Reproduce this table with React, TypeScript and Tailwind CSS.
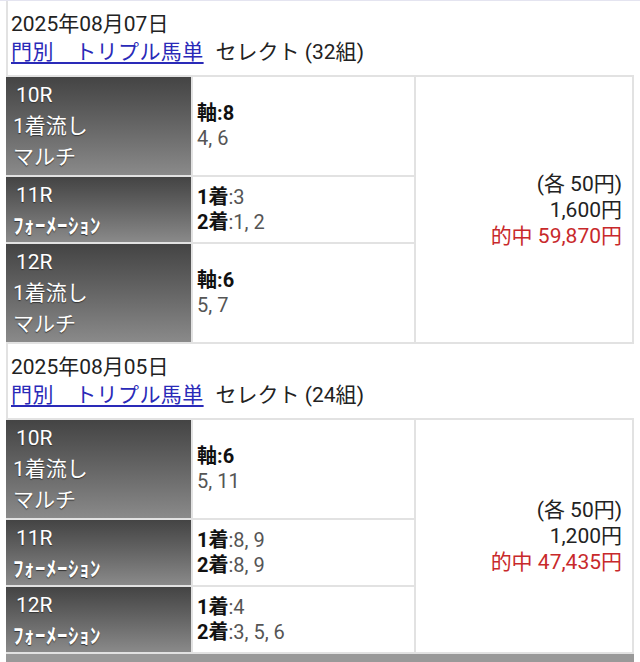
const font = { fontFamily: "Roboto, 'Noto Sans CJK JP', sans-serif" };

type Race = {
  race: string;
  kind: string[];
  picks: { label: string; bold: boolean; value: string }[];
  tall: boolean;
};

const blocks = [
  {
    date: "2025年08月07日",
    count: "32組",
    unit: "1,600円",
    hit: "59,870円",
    races: [
      { race: "10R", kind: ["1着流し", "マルチ"], picks: [{ label: "軸:8", bold: true, value: "" }, { label: "", bold: false, value: "4, 6" }], tall: true },
      { race: "11R", kind: ["ﾌｫｰﾒｰｼｮﾝ"], picks: [{ label: "1着", bold: true, value: ":3" }, { label: "2着", bold: true, value: ":1, 2" }], tall: false },
      { race: "12R", kind: ["1着流し", "マルチ"], picks: [{ label: "軸:6", bold: true, value: "" }, { label: "", bold: false, value: "5, 7" }], tall: true },
    ] as Race[],
  },
  {
    date: "2025年08月05日",
    count: "24組",
    unit: "1,200円",
    hit: "47,435円",
    races: [
      { race: "10R", kind: ["1着流し", "マルチ"], picks: [{ label: "軸:6", bold: true, value: "" }, { label: "", bold: false, value: "5, 11" }], tall: true },
      { race: "11R", kind: ["ﾌｫｰﾒｰｼｮﾝ"], picks: [{ label: "1着", bold: true, value: ":8, 9" }, { label: "2着", bold: true, value: ":8, 9" }], tall: false },
      { race: "12R", kind: ["ﾌｫｰﾒｰｼｮﾝ"], picks: [{ label: "1着", bold: true, value: ":4" }, { label: "2着", bold: true, value: ":3, 5, 6" }], tall: false },
    ] as Race[],
  },
];

function RaceRow({ r }: { r: Race }) {
  return (
    <div className={`flex border-b-2 border-[#e2e2e2] ${r.tall ? "h-[100px]" : "h-[67px]"}`}>
      <div className="w-[185px] shrink-0 bg-gradient-to-b from-[#444] to-[#8a8a8a] px-[7px] pt-[3px] text-[21px] leading-[31px] text-white [text-shadow:0_1px_1px_#333]">
        <div className="pl-[3px]">{r.race}</div>
        {r.kind.map((k) => (
          <div key={k} className={k.startsWith("ﾌ") ? "font-bold tracking-[0.5px]" : ""}>{k}</div>
        ))}
      </div>
      <div className="flex flex-1 flex-col justify-center border-l-2 border-[#e2e2e2] pl-[4px] text-[20px] leading-[25px]">
        {r.picks.map((p, i) => (
          <div key={i}>
            {p.label && <span className={p.bold ? "font-bold text-[#111]" : ""}>{p.label}</span>}
            <span className="text-[#555]">{p.value}</span>
          </div>
        ))}
      </div>
    </div>
  );
}

export default function App() {
  return (
    <div className="h-[662px] w-[640px] overflow-hidden bg-white text-[#222]" style={font}>
      <div className="h-[1px] bg-[#e4e4f0]" />
      <div className="ml-[6px] w-[628px]">
        {blocks.map((b) => (
          <div key={b.date}>
            <div className="flex h-[76px] flex-col justify-center border-b-2 border-l-2 border-[#e2e2e2] pl-[3px] text-[21px] leading-[28px]">
              <div>{b.date}</div>
              <div>
                <a href="#" className="tracking-[0.4px] text-[#2a2ab8] underline underline-offset-[3px]">門別　トリプル馬単</a>
                <span className="ml-[12px]">セレクト ({b.count})</span>
              </div>
            </div>
            <div className="flex border-r-2 border-[#e2e2e2]">
              <div className="w-[408px] shrink-0">
                {b.races.map((r) => (
                  <RaceRow key={r.race} r={r} />
                ))}
              </div>
              <div className="flex flex-1 flex-col items-end justify-center border-b-2 border-l-2 border-[#e2e2e2] pr-[10px] text-[21px] leading-[26px]">
                <div>(各 50円)</div>
                <div>{b.unit}</div>
                <div className="text-[#c8292b]">的中 {b.hit}</div>
              </div>
            </div>
          </div>
        ))}
        <div className="h-[10px] bg-[#999]" />
      </div>
    </div>
  );
}
